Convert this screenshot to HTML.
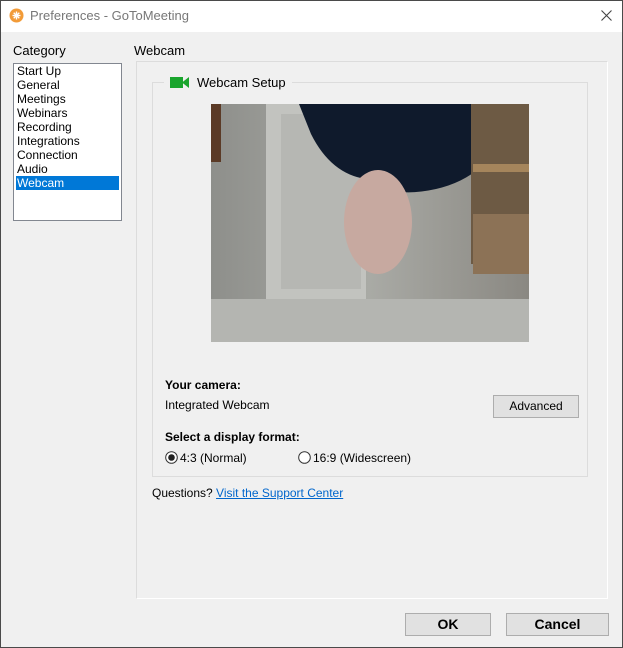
<!DOCTYPE html>
<html><head><style>
*{margin:0;padding:0;box-sizing:border-box}
body{width:623px;height:648px;overflow:hidden;font-family:"Liberation Sans",sans-serif;font-size:12px;color:#000;background:#f0f0f0}
.win{position:absolute;left:0;top:0;width:623px;height:648px;background:#f0f0f0}
.frame{position:absolute;left:0;top:0;width:623px;height:648px;border:1px solid #4a4a4a}
.title{position:absolute;left:0;top:0;width:623px;height:32px;background:#fff}
.abs{position:absolute;white-space:nowrap}
.list{position:absolute;left:13px;top:63px;width:109px;height:158px;background:#fff;border:1px solid #828790}
.list div{height:14px;line-height:14px;padding-left:3px;font-size:12px}
.btn{position:absolute;background:#e1e1e1;border:1px solid #adadad;text-align:center}
</style></head><body>
<div class="win">
<div class="title">
<svg class="abs" style="left:9px;top:8px" width="15" height="15" viewBox="0 0 15 15"><circle cx="7.5" cy="7.5" r="7" fill="#f29b38"/><g stroke="#fff" stroke-width="1.4"><line x1="7.5" y1="3.5" x2="7.5" y2="11.5"/><line x1="3.5" y1="7.5" x2="11.5" y2="7.5"/><line x1="4.7" y1="4.7" x2="10.3" y2="10.3"/><line x1="10.3" y1="4.7" x2="4.7" y2="10.3"/></g></svg>
<div class="abs" style="left:30px;top:8px;font-size:13px;color:#777">Preferences - GoToMeeting</div>
<svg class="abs" style="left:601px;top:10px" width="11" height="11"><path d="M0.5 0.5L10.5 10.5M10.5 0.5L0.5 10.5" stroke="#444" stroke-width="1.1"/></svg>
</div>
<div class="abs" style="left:13px;top:43px;font-size:13px">Category</div>
<div class="list">
<div>Start Up</div><div>General</div><div>Meetings</div><div>Webinars</div><div>Recording</div><div>Integrations</div><div>Connection</div><div>Audio</div><div style="background:#0078d7;color:#fff;margin-left:2px;margin-right:2px;padding-left:1px">Webcam</div>
</div>
<div class="abs" style="left:134px;top:43px;font-size:13px">Webcam</div>
<div class="abs" style="left:136px;top:61px;width:472px;height:538px;border:1px solid #dcdcdc;border-right-color:#fff;border-bottom-color:#fff;"></div>
<div class="abs" style="left:152px;top:82px;width:436px;height:395px;border:1px solid #dcdcdc"></div>
<div class="abs" style="left:164px;top:74px;width:128px;height:16px;background:#f0f0f0"></div>
<svg class="abs" style="left:170px;top:77px" width="19" height="11" viewBox="0 0 19 11"><rect x="0" y="0" width="13" height="11" fill="#1aa52d"/><polygon points="12,5.5 19,0 19,11" fill="#1aa52d"/></svg>
<div class="abs" style="left:197px;top:75px;font-size:13px">Webcam Setup</div>
<svg class="abs" style="left:211px;top:104px" width="318" height="238" viewBox="0 0 318 238">
<defs><linearGradient id="g" x1="0" y1="0" x2="1" y2="0"><stop offset="0" stop-color="#8e8f8b"/><stop offset="0.5" stop-color="#a9aaa5"/><stop offset="1" stop-color="#8a8882"/></linearGradient></defs>
<rect width="318" height="238" fill="url(#g)"/>
<rect x="0" y="195" width="318" height="43" fill="#b4b5b1"/>
<rect x="55" y="0" width="100" height="195" fill="#c2c3bf"/>
<rect x="70" y="10" width="80" height="175" fill="#b6b7b3"/>
<rect x="0" y="0" width="10" height="58" fill="#5b3a26"/>
<path d="M88 0 H300 Q290 70 225 85 Q180 95 155 75 Q120 70 100 30 Z" fill="#0f1a2c"/>
<ellipse cx="167" cy="118" rx="34" ry="52" fill="#c7a9a0"/>
<rect x="260" y="0" width="58" height="160" fill="#6d5a44"/>
<rect x="262" y="110" width="56" height="60" fill="#8c7256"/>
<rect x="262" y="60" width="56" height="8" fill="#a5855c"/>
</svg>
<div class="abs" style="left:165px;top:378px;font-weight:bold">Your camera:</div>
<div class="abs" style="left:165px;top:398px">Integrated Webcam</div>
<div class="btn" style="left:493px;top:395px;width:86px;height:23px;line-height:21px">Advanced</div>
<div class="abs" style="left:165px;top:430px;font-weight:bold">Select a display format:</div>
<svg class="abs" style="left:165px;top:451px" width="13" height="13"><circle cx="6.5" cy="6.5" r="5.8" fill="#fff" stroke="#333"/><circle cx="6.5" cy="6.5" r="3.3" fill="#222"/></svg>
<div class="abs" style="left:180px;top:451px">4:3 (Normal)</div>
<svg class="abs" style="left:298px;top:451px" width="13" height="13"><circle cx="6.5" cy="6.5" r="5.8" fill="#fff" stroke="#333"/></svg>
<div class="abs" style="left:313px;top:451px">16:9 (Widescreen)</div>
<div class="abs" style="left:152px;top:486px">Questions? <span style="color:#0066cc;text-decoration:underline">Visit the Support Center</span></div>
<div class="btn" style="left:405px;top:613px;width:86px;height:23px;line-height:21px;font-weight:bold;font-size:14px">OK</div>
<div class="btn" style="left:506px;top:613px;width:103px;height:23px;line-height:21px;font-weight:bold;font-size:14px">Cancel</div>
<div class="frame"></div>
</div>
</body></html>
